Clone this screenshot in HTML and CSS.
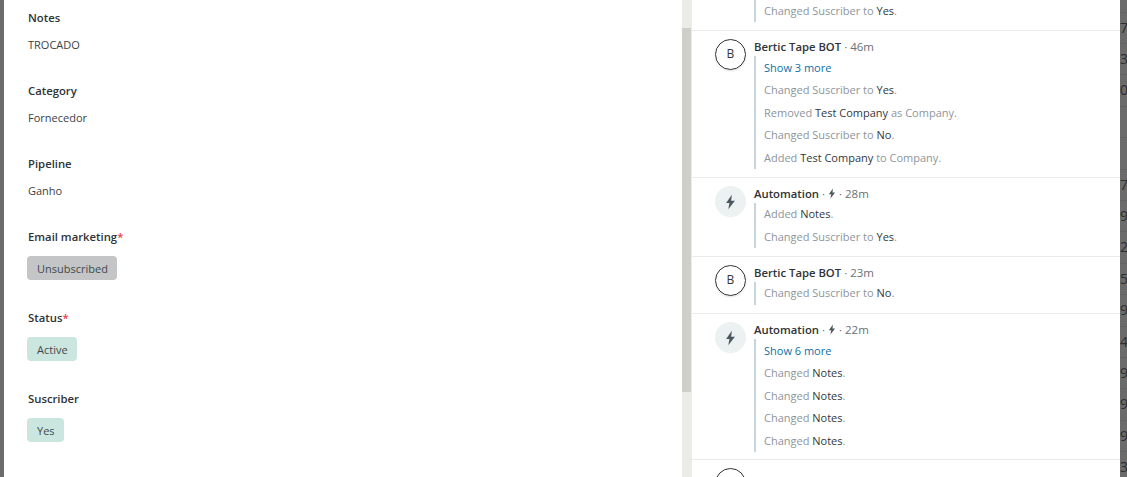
FILE: index.html
```html
<!DOCTYPE html>
<html lang="en">
<head>
<meta charset="utf-8">
<title>Record</title>
<link rel="stylesheet" href="styles.css">
</head>
<body>
<div class="page">
  <div class="edge"></div>
  <main class="details">
    <section class="field"><h3>Notes</h3><p>TROCADO</p></section>
    <section class="field"><h3>Category</h3><p>Fornecedor</p></section>
    <section class="field"><h3>Pipeline</h3><p>Ganho</p></section>
    <section class="field field-tag"><h3>Email marketing<span class="req">*</span></h3><span class="tag tag-grey">Unsubscribed</span></section>
    <section class="field field-tag"><h3>Status<span class="req">*</span></h3><span class="tag tag-green">Active</span></section>
    <section class="field field-tag"><h3>Suscriber</h3><span class="tag tag-green">Yes</span></section>
  </main>
  <div class="scrollbar"><div class="track-top"></div><div class="thumb"></div></div>
  <aside class="feed">
    <article class="entry entry-first">
      <div class="lines lines-cut"><div class="line">Changed Suscriber to <b>Yes</b>.</div></div>
    </article>
    <article class="entry entry-a">
      <div class="avatar">B</div>
      <div class="body">
        <div class="head"><strong>Bertic Tape BOT</strong> · 46m</div>
        <div class="lines">
          <a class="more">Show 3 more</a>
          <div class="line">Changed Suscriber to <b>Yes</b>.</div>
          <div class="line">Removed <b>Test Company</b> as Company.</div>
          <div class="line">Changed Suscriber to <b>No</b>.</div>
          <div class="line">Added <b>Test Company</b> to Company.</div>
        </div>
      </div>
    </article>
    <article class="entry entry-b">
      <div class="avatar avatar-auto"><svg viewBox="0 0 10 14" width="11" height="16"><path d="M6.2 0.5 1 8h3L3 13.5 9 5.8H5.6z"/></svg></div>
      <div class="body">
        <div class="head"><strong>Automation</strong> · <svg class="bolt" viewBox="0 0 10 14" width="8" height="11"><path d="M6.2 0.5 1 8h3L3 13.5 9 5.8H5.6z"/></svg> · 28m</div>
        <div class="lines">
          <div class="line">Added <b>Notes</b>.</div>
          <div class="line">Changed Suscriber to <b>Yes</b>.</div>
        </div>
      </div>
    </article>
    <article class="entry entry-c">
      <div class="avatar">B</div>
      <div class="body">
        <div class="head"><strong>Bertic Tape BOT</strong> · 23m</div>
        <div class="lines">
          <div class="line">Changed Suscriber to <b>No</b>.</div>
        </div>
      </div>
    </article>
    <article class="entry entry-d">
      <div class="avatar avatar-auto"><svg viewBox="0 0 10 14" width="11" height="16"><path d="M6.2 0.5 1 8h3L3 13.5 9 5.8H5.6z"/></svg></div>
      <div class="body">
        <div class="head"><strong>Automation</strong> · <svg class="bolt" viewBox="0 0 10 14" width="8" height="11"><path d="M6.2 0.5 1 8h3L3 13.5 9 5.8H5.6z"/></svg> · 22m</div>
        <div class="lines">
          <a class="more">Show 6 more</a>
          <div class="line">Changed <b>Notes</b>.</div>
          <div class="line">Changed <b>Notes</b>.</div>
          <div class="line">Changed <b>Notes</b>.</div>
          <div class="line">Changed <b>Notes</b>.</div>
        </div>
      </div>
    </article>
    <article class="entry entry-e"><div class="avatar"></div></article>
  </aside>
  <div class="behind">
    <div class="cell"></div>
    <div class="cell">7</div>
    <div class="cell">3</div>
    <div class="cell">0</div>
    <div class="cell"></div>
    <div class="cell"></div>
    <div class="cell">71</div>
    <div class="cell">99</div>
    <div class="cell">2</div>
    <div class="cell">56</div>
    <div class="cell">9</div>
    <div class="cell">4</div>
    <div class="cell">99</div>
    <div class="cell">9</div>
    <div class="cell">95</div>
    <div class="cell">39</div>
  </div>
</div>
</body>
</html>
```
FILE: styles.css
```css
* { box-sizing: border-box; }
html, body { margin: 0; padding: 0; height: 100%; overflow: hidden; background: #fff; }
body { font-family: "Open Sans", "Noto Sans", sans-serif; font-size: 11px; color: #33383b; }
.page { display: flex; width: 1127px; height: 477px; overflow: hidden; }
.edge { width: 4px; background: #6b6b6b; flex: none; }

.details { width: 678px; flex: none; padding: 11px 24px 0; background: #fff; }
.field { height: 73px; }
.field-tag { height: 81px; }
.field h3 { margin: 0; font-size: 11.3px; line-height: 13px; font-weight: 600; color: #2f3336; }
.field p { margin: 13px 0 0; line-height: 15px; color: #3c4145; }
.req { color: #e8404a; }
.tag { display: inline-block; height: 24px; line-height: 25px; margin: 13px 0 0 -1px; padding: 0 9px 0 10px; border-radius: 4px; color: #3f4a4a; }
.tag-grey { background: #c4c5c7; }
.tag-green { background: #cbe6df; }

.scrollbar { width: 10px; flex: none; display: flex; flex-direction: column; background: #ebebe7; }
.track-top { height: 28px; flex: none; }
.thumb { height: 364px; width: 9px; flex: none; background: #cfcfc9; }

.feed { width: 428px; flex: none; background: #fff; overflow: hidden; }
.entry { display: flex; gap: 8px; padding-left: 23px; border-bottom: 1px solid #e9ebec; }
.entry-first { height: 31px; padding-left: 62px; }
.entry-a { height: 147px; padding-top: 8px; }
.entry-b { height: 79px; padding-top: 8px; }
.entry-c { height: 57px; padding-top: 8px; }
.entry-d { height: 146px; padding-top: 8px; }
.entry-e { padding-top: 8px; border: 0; }
.avatar { width: 31px; height: 31px; flex: none; border-radius: 50%; border: 1px solid #2f3336; display: flex; align-items: center; justify-content: center; font-size: 12px; line-height: 14px; padding-bottom: 1px; color: #33383b; box-shadow: 0 1px 2px rgba(0,0,0,.12); }
.avatar-auto { border: 0; background: #ecf1f2; box-shadow: none; padding-bottom: 0; }
.avatar-auto svg, .bolt { fill: #4c5860; }
.body { flex: 1; min-width: 0; }
.head { height: 17px; line-height: 15px; font-size: 11.5px; color: #6a7074; }
.head strong { font-size: 11.3px; font-weight: 600; color: #2f3336; }
.bolt { vertical-align: -1px; }
.lines { border-left: 2px solid #c9d5dd; padding-left: 8px; color: #8d959b; }
.lines-cut { height: 22px; }
.line { line-height: 22.6px; }
.line b { font-weight: 400; color: #33383b; }
.more { display: block; line-height: 23px; color: #0e6fa5; }

.behind { width: 7px; flex: none; background: #6b6b6b; overflow: hidden; color: #2e2e2e; font-size: 14px; }
.cell { height: 31.4px; line-height: 30px; border-bottom: 1px solid #626262; white-space: nowrap; }
.cell:first-child { margin-top: -18.7px; }
```
